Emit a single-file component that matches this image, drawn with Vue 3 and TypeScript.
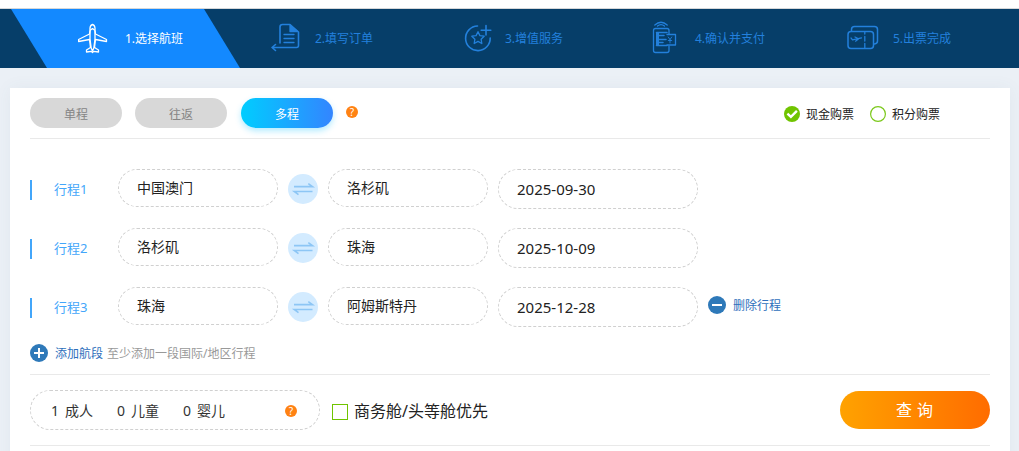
<script setup lang="ts">
import { ref } from 'vue'

interface Segment {
  id: number
  from: string
  to: string
  date: string
}

const steps: string[] = ['选择航班', '填写订单', '增值服务', '确认并支付', '出票完成']
const tripTypes: string[] = ['单程', '往返', '多程']
const activeType = ref(2)
const payments: string[] = ['现金购票', '积分购票']
const payment = ref(0)
const segments = ref<Segment[]>([
  { id: 1, from: '中国澳门', to: '洛杉矶', date: '2025-09-30' },
  { id: 2, from: '洛杉矶', to: '珠海', date: '2025-10-09' },
  { id: 3, from: '珠海', to: '阿姆斯特丹', date: '2025-12-28' },
])
const passengers = [
  { count: 1, label: '成人' },
  { count: 0, label: '儿童' },
  { count: 0, label: '婴儿' },
]

function swap(s: Segment): void {
  const from = s.from
  s.from = s.to
  s.to = from
}
</script>

<template>
  <div class="page">
    <nav class="steps">
      <div v-for="(s, i) in steps" :key="s" class="step" :class="{ current: i === 0 }">
        <svg class="step-icon" viewBox="0 0 47 59" fill="none" stroke="currentColor" stroke-width="1.3" stroke-linejoin="round" stroke-linecap="round">
          <template v-if="i === 0">
            <path d="M12 22V19Q12.4 16 14.5 15.5Q16.6 16 17 19V22L17.5 25L28.5 30.5V32.5L17.5 30.5L16.5 38.5L20.5 41V43L15.5 42.3L14.5 43.5L13.5 42.3L8.5 43V41L12.5 38.5L11.5 30.5L.6 32.5V30.5L11.5 25Z" />
            <path d="M12 22V30L13.2 39L14.5 42L15.8 39L17 30V22M12.5 21L14.5 19.6L16.5 21" />
          </template>
          <template v-else-if="i === 1">
            <path d="M12 34V18Q12 15.5 14.5 15.5H22L30.5 23V36.5Q30.5 38.5 28.5 38.5H4M7.5 35.5L4 38.5L7.5 41.5" stroke-width="1.6" />
            <path d="M22 16V22.5H29.5Z" fill="currentColor" />
            <path d="M16 25.5H26M16 29.5H26M16 33.5H26" />
          </template>
          <template v-else-if="i === 2">
            <path d="M19.5 17A12.3 12.3 0 1 0 32.2 29M28 16.5V26M23.2 21.2H32.8" stroke-width="1.6" />
            <path d="M20 22.7L21.9 26.6L26.2 27.2L23.1 30.2L23.8 34.5L20 32.4L16.2 34.5L16.9 30.2L13.8 27.2L18.1 26.6Z" />
          </template>
          <template v-else-if="i === 3">
            <path d="M21 25V21.5Q21 19.5 19 19.5H7.5Q5.5 19.5 5.5 21.5V41.5Q5.5 43.5 7.5 43.5H19Q21 43.5 21 41.5V37" />
            <path d="M6.8 16Q13 10.5 19.2 16M9.5 17Q13 14.3 16.5 17" />
            <path d="M8.5 23.5H19M8.5 36.5H19" stroke-width="1.5" />
            <path d="M9.5 23V37" stroke-width="3" stroke-linecap="butt" />
            <path d="M10 26.5H16M10 30.5H18M10 33.5H15" stroke-width="1.5" />
            <path d="M19 25.5H27.5V36H19" />
            <path d="M20.2 28L22 30.5L23.8 28M22 30.5V34M20.3 31.5H23.7" stroke-width=".9" />
          </template>
          <template v-else>
            <rect x="2" y="22.5" width="25.5" height="17" rx="3" stroke-width="1.5" />
            <path d="M5.5 22V20.5Q5.5 17.5 8.5 17.5H28.5Q31.5 17.5 31.5 20.5V32Q31.5 34.5 28.5 35" stroke-width="1.5" />
            <path d="M18.8 23V25M18.8 27.5V32M18.8 34.5V39" />
            <path d="M5 29L6.5 30.8L15.5 28.8M9 28L12 29.5M12.5 30L9.5 32.2" stroke-width="1.2" />
          </template>
        </svg>
        <span class="step-text">{{ i + 1 }}.{{ s }}</span>
      </div>
    </nav>

    <main class="card">
      <header class="top">
        <button v-for="(t, i) in tripTypes" :key="t" class="tab" :class="{ active: activeType === i }" @click="activeType = i">{{ t }}</button>
        <span class="help">?</span>
        <div class="payments">
          <label v-for="(p, i) in payments" :key="p" class="payment" @click="payment = i">
            <svg width="16" height="16" viewBox="0 0 16 16" fill="none">
              <template v-if="payment === i">
                <circle cx="8" cy="8" r="8" fill="#70c400" />
                <path d="M3.4 7.6L6.9 10.9L12.9 4.9" stroke="#fff" stroke-width="2.4" />
              </template>
              <circle v-else cx="8" cy="8" r="7.4" stroke="#7bc81b" stroke-width="1.2" />
            </svg>
            <span>{{ p }}</span>
          </label>
        </div>
      </header>

      <section class="segments">
        <div v-for="(s, i) in segments" :key="s.id" class="segment">
          <span class="seg-label">行程{{ i + 1 }}</span>
          <div class="field">{{ s.from }}</div>
          <button class="swap" @click="swap(s)">
            <svg width="30" height="30" viewBox="0 0 30 30" fill="none" stroke="#8dc6f5" stroke-width="1.6">
              <path d="M6 12.6H24.5L20.3 9.7M24.5 17.5H6.3L10.5 20.6" />
            </svg>
          </button>
          <div class="field">{{ s.to }}</div>
          <div class="field date">{{ s.date }}</div>
          <a v-if="i === 2" class="remove">
            <svg width="18" height="18" viewBox="0 0 18 18"><circle cx="9" cy="9" r="9" fill="#2e79b9" /><path d="M4 9H14" stroke="#fff" stroke-width="2" /></svg>
            <span>删除行程</span>
          </a>
        </div>
        <div class="add-row">
          <svg width="18" height="18" viewBox="0 0 18 18"><circle cx="9" cy="9" r="9" fill="#2e79b9" /><path d="M4 9H14M9 4V14" stroke="#fff" stroke-width="2" /></svg>
          <a class="add">添加航段</a>
          <span class="hint">至少添加一段国际/地区行程</span>
        </div>
      </section>

      <footer class="bottom">
        <div class="people">
          <span v-for="p in passengers" :key="p.label" class="person"><span class="count">{{ p.count }}</span>{{ p.label }}</span>
          <span class="help">?</span>
        </div>
        <label class="cabin"><span class="box"></span>商务舱/头等舱优先</label>
        <button class="search">查询</button>
      </footer>
    </main>
  </div>
</template>

<style>
html,
body {
  margin: 0;
  overflow: hidden;
}
</style>

<style scoped>
.page {
  box-sizing: border-box;
  width: 1019px;
  height: 451px;
  overflow: hidden;
  padding-top: 8px;
  background: linear-gradient(#fff 8px, #ebf0f6 8px);
  font-family: "Noto Sans", "Noto Sans CJK SC", sans-serif;
  font-size: 12px;
  color: #222;
}
button {
  border: 0;
  padding: 0;
  font-family: inherit;
  cursor: pointer;
}
svg {
  display: block;
  flex: none;
}
.steps {
  position: relative;
  display: grid;
  grid-template-columns: 190px 190px 190px 198px 1fr;
  height: 59px;
  padding-left: 78px;
  border-top: 1px solid #d5d7d9;
  background: #063e69;
}
.step {
  display: flex;
  color: #2380dc;
}
.step.current {
  color: #fff;
}
.step.current::before {
  content: "";
  position: absolute;
  left: 11px;
  top: 0;
  width: 229px;
  height: 59px;
  background: #1389ff;
  clip-path: polygon(0 0, 193px 0, 100% 100%, 36px 100%);
}
.step-icon {
  position: relative;
  width: 47px;
  height: 59px;
}
.step-text {
  position: relative;
  line-height: 59px;
  white-space: nowrap;
}
.card {
  box-sizing: border-box;
  width: 1000px;
  height: 400px;
  margin: 20px 0 0 10px;
  padding: 0 20px;
  background: #fff;
  box-shadow: 0 0 16px rgba(70, 95, 115, 0.06);
}
.top {
  display: flex;
  height: 50px;
  border-bottom: 1px solid #e9e9e9;
}
.tab {
  width: 92px;
  height: 30px;
  margin: 10px 13px 0 0;
  border-radius: 15px;
  background: #d8d8d8;
  color: #858585;
  font-size: 12px;
  line-height: 30px;
  padding-top: 2px;
}
.tab.active {
  margin-left: 1px;
  background: linear-gradient(90deg, #00cdff, #3385ff);
  color: #fff;
  box-shadow: 0 3px 6px rgba(0, 190, 255, 0.3);
}
.help {
  width: 12px;
  height: 12px;
  border-radius: 50%;
  background: #ff8213;
  color: #fff;
  font-size: 10px;
  line-height: 12px;
  text-align: center;
}
.top .help {
  margin-top: 18px;
}
.payments {
  display: flex;
  gap: 16px;
  margin: 18px 50px 0 auto;
}
.payment {
  display: flex;
  gap: 6px;
  height: 16px;
  line-height: 17px;
}
.segments {
  height: 235px;
  border-bottom: 1px solid #e9e9e9;
}
.segment {
  display: flex;
  align-items: flex-start;
  height: 59px;
}
.segment:first-child {
  padding-top: 30px;
}
.seg-label {
  box-sizing: border-box;
  width: 88px;
  height: 20px;
  margin-top: 11px;
  padding-left: 22px;
  border-left: 2px solid #43a6fa;
  color: #43a6fa;
  font-size: 13px;
  line-height: 18px;
}
.field {
  box-sizing: border-box;
  width: 160px;
  height: 38px;
  padding-left: 18px;
  border: 1px dashed #d0d0d0;
  border-radius: 19px;
  font-size: 14px;
  line-height: 36px;
}
.field.date {
  width: 200px;
  height: 40px;
  margin-left: 10px;
  border-radius: 20px;
  font-size: 15px;
  line-height: 39px;
}
.swap {
  width: 30px;
  height: 30px;
  margin: 5px 10px 0;
  border-radius: 50%;
  background: #d3ebff;
}
.remove {
  display: flex;
  gap: 7px;
  margin: 9px 0 0 10px;
  line-height: 20px;
  color: #2e6fbc;
}
.add-row {
  display: flex;
  height: 18px;
  line-height: 20px;
  margin-top: -2px;
}
.add {
  margin: 0 4px 0 7px;
  color: #2e6fbc;
}
.hint {
  color: #999;
}
.bottom {
  display: flex;
  height: 70px;
  border-bottom: 1px solid #e9e9e9;
}
.people {
  box-sizing: border-box;
  display: flex;
  width: 290px;
  height: 40px;
  margin-top: 15px;
  padding-left: 20px;
  border: 1px dashed #d0d0d0;
  border-radius: 20px;
  font-size: 14px;
  line-height: 40px;
  color: #333;
}
.person {
  width: 66px;
}
.count {
  display: inline-block;
  width: 14px;
}
.people .help {
  margin: 14px 0 0 36px;
}
.cabin {
  display: flex;
  gap: 6px;
  margin: 15px 0 0 12px;
  font-size: 16px;
  line-height: 42px;
}
.box {
  box-sizing: border-box;
  width: 16px;
  height: 16px;
  margin-top: 14px;
  border: 1px solid #70c400;
}
.search {
  width: 150px;
  height: 38px;
  margin: 16px 0 0 auto;
  padding-left: 4px;
  border-radius: 19px;
  background: linear-gradient(90deg, #ffa200, #ff6c00);
  color: #fff;
  font-size: 16px;
  letter-spacing: 5px;
  line-height: 38px;
}
</style>
